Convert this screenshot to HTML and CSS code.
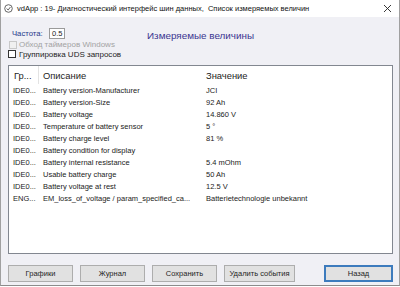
FILE: index.html
```html
<!DOCTYPE html>
<html lang="ru">
<head>
<meta charset="utf-8">
<title>vdApp</title>
<link rel="stylesheet" href="styles.css">
</head>
<body>
<div class="window">
  <div class="titlebar">
    <svg class="app-icon" width="9" height="9" viewBox="0 0 9 9">
      <circle cx="4.5" cy="4.5" r="3.8" fill="none" stroke="#555" stroke-width="0.9"/>
      <path d="M2.6 4.6 L4.2 6 L6.4 3" fill="none" stroke="#555" stroke-width="0.9"/>
    </svg>
    <span class="title">vdApp : 19- Диагностический интерфейс шин данных,&nbsp; Список измеряемых величин</span>
    <svg class="close" width="9" height="9" viewBox="0 0 9 9">
      <path d="M1 1 L8 8 M8 1 L1 8" stroke="#222" stroke-width="0.9"/>
    </svg>
  </div>
  <div class="content">
    <div class="top">
      <div class="opts">
        <div class="freq">
          <span class="freq-label">Частота:</span>
          <span class="freq-input">0.5</span>
        </div>
        <div class="check disabled"><span class="box"></span><span>Обход таймеров Windows</span></div>
        <div class="check"><span class="box"></span><span>Группировка UDS запросов</span></div>
      </div>
      <div class="heading">Измеряемые величины</div>
    </div>
    <div class="list">
      <div class="list-head">
        <div class="c1">Гр...</div>
        <div class="c2">Описание</div>
        <div class="c3">Значение</div>
      </div>
      <div class="row"><div class="c1">IDE0...</div><div class="c2">Battery version-Manufacturer</div><div class="c3">JCI</div></div>
      <div class="row"><div class="c1">IDE0...</div><div class="c2">Battery version-Size</div><div class="c3">92 Ah</div></div>
      <div class="row"><div class="c1">IDE0...</div><div class="c2">Battery voltage</div><div class="c3">14.860 V</div></div>
      <div class="row"><div class="c1">IDE0...</div><div class="c2">Temperature of battery sensor</div><div class="c3">5 °</div></div>
      <div class="row"><div class="c1">IDE0...</div><div class="c2">Battery charge level</div><div class="c3">81 %</div></div>
      <div class="row"><div class="c1">IDE0...</div><div class="c2">Battery condition for display</div><div class="c3"></div></div>
      <div class="row"><div class="c1">IDE0...</div><div class="c2">Battery internal resistance</div><div class="c3">5.4 mOhm</div></div>
      <div class="row"><div class="c1">IDE0...</div><div class="c2">Usable battery charge</div><div class="c3">50 Ah</div></div>
      <div class="row"><div class="c1">IDE0...</div><div class="c2">Battery voltage at rest</div><div class="c3">12.5 V</div></div>
      <div class="row"><div class="c1">ENG...</div><div class="c2">EM_loss_of_voltage / param_specified_ca...</div><div class="c3">Batterietechnologie unbekannt</div></div>
    </div>
    <div class="buttons">
      <button class="btn w65">Графики</button>
      <button class="btn w65">Журнал</button>
      <button class="btn w65">Сохранить</button>
      <button class="btn w71">Удалить события</button>
      <button class="btn back">Назад</button>
    </div>
  </div>
</div>
</body>
</html>
```

FILE: styles.css
```css
* { box-sizing: border-box; }
html, body { margin: 0; padding: 0; background: #ffffff; }
body { font-family: "Liberation Sans", Arial, sans-serif; color: #1e1e1e; }

.window {
  width: 400px;
  height: 286px;
  display: flex;
  flex-direction: column;
  background: #f0f0f5;
  border-left: 1px solid #a0a0a0;
  border-right: 1px solid #a0a0a0;
  border-bottom: 1px solid #8c8c8c;
}

.titlebar {
  height: 17px;
  background: #ffffff;
  display: flex;
  align-items: center;
  padding-left: 3px;
  padding-right: 7px;
  flex-shrink: 0;
}
.app-icon { flex-shrink: 0; margin-right: 4px; }
.title { font-size: 7.5px; color: #111; white-space: nowrap; flex: 1; }
.close { flex-shrink: 0; }

.content {
  flex: 1;
  display: flex;
  flex-direction: column;
  padding: 11px 6px 0 7px;
}

.top { display: flex; height: 31px; }
.opts { width: 139px; display: flex; flex-direction: column; }
.freq { display: flex; align-items: center; height: 11px; padding-left: 4px; }
.freq-label { font-size: 7.7px; color: #1f3a8a; width: 37px; }
.freq-input {
  width: 16px; height: 11px;
  border: 1px solid #9a9a9a;
  background: #ffffff;
  font-size: 7.5px;
  line-height: 9px;
  padding-left: 2px;
  color: #222;
}
.check { display: flex; align-items: center; height: 10px; font-size: 8px; margin-top: 0; }
.check .box {
  width: 8px; height: 8px;
  border: 1px solid #333;
  background: #fff;
  margin-right: 3px;
}
.check.disabled { color: #a3a3a3; padding-left: 1px; margin-top: 1px; }
.check.disabled .box { border-color: #c8c8c8; background: #f0f0f0; margin-right: 2px; }

.heading {
  font-size: 9.9px;
  color: #3a3590;
  margin-top: 2px;
  white-space: nowrap;
}

.list {
  margin-top: 6px;
  height: 189px;
  background: #ffffff;
  border: 1px solid #828790;
  flex-shrink: 0;
}
.list-head { display: flex; height: 18px; align-items: center; font-size: 9.4px; color: #1e1e1e; }
.list-head .c1 { border-right: 1px solid #e3e3e3; height: 18px; display: flex; align-items: center; }
.row { display: flex; height: 12px; align-items: center; font-size: 7.5px; color: #222; }
.c1 { width: 30px; padding-left: 5px; white-space: nowrap; overflow: hidden; }
.c2 { width: 167px; padding-left: 4px; white-space: nowrap; overflow: hidden; }
.row .c1 { padding-left: 4px; }
.c3 { flex: 1; white-space: nowrap; }

.buttons { display: flex; gap: 7px; margin-top: 11px; }
.btn {
  height: 17px;
  border: 1px solid #adadad;
  background: #e1e1e1;
  font-family: "Liberation Sans", Arial, sans-serif;
  font-size: 7.5px;
  color: #1e1e1e;
  padding: 0;
}
.w65 { width: 65px; }
.w71 { width: 71px; }
.back { width: 69px; margin-left: auto; border: 2px solid #3d7bbd; }
```
